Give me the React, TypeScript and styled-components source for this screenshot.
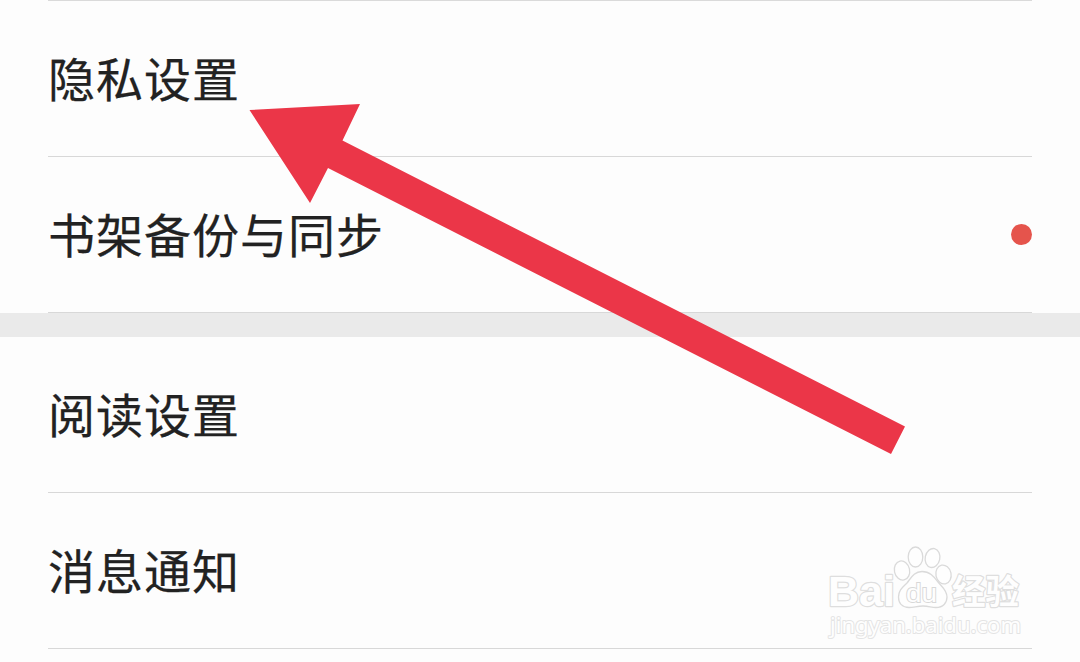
import React from "react";
import styled, { createGlobalStyle } from "styled-components";

const GlobalStyle = createGlobalStyle`
  * { box-sizing: border-box; }
  body { margin: 0; background: #fdfdfd; overflow: hidden; }
`;

const Page = styled.main`
  position: relative;
  width: 1080px;
  height: 662px;
  overflow: hidden;
  background: #fdfdfd;
  color: #222;
  font-family: "Noto Sans CJK SC", sans-serif;
`;

const Group = styled.section<{ $topLine?: boolean }>`
  display: flex;
  flex-direction: column;
  padding: 0 48px;
  &::before {
    content: "";
    display: ${(p) => (p.$topLine ? "block" : "none")};
    height: 1px;
    background: #dadada;
  }
`;

const Row = styled.div`
  display: flex;
  align-items: center;
  justify-content: space-between;
  height: 156px;
  border-bottom: 1px solid #d8d8d8;
`;

const Label = styled.span`
  font-size: 47px;
  letter-spacing: 1px;
  line-height: 70px;
  white-space: nowrap;
  margin-bottom: 3px;
  -webkit-text-stroke: 0.25px #222;
`;

const Dot = styled.i`
  width: 21px;
  height: 21px;
  border-radius: 50%;
  background: #e5544c;
`;

const Divider = styled.div`
  height: 24px;
  background: #eaeaea;
`;

const Arrow = styled.svg`
  position: absolute;
  left: 0;
  top: 0;
  pointer-events: none;
`;

const Watermark = styled.svg`
  position: absolute;
  left: 820px;
  top: 540px;
  pointer-events: none;
`;

export default function App() {
  return (
    <>
      <GlobalStyle />
      <Page>
        <Group $topLine>
          <Row><Label>隐私设置</Label></Row>
          <Row><Label>书架备份与同步</Label><Dot /></Row>
        </Group>
        <Divider />
        <Group>
          <Row><Label>阅读设置</Label></Row>
          <Row><Label>消息通知</Label></Row>
        </Group>
        <Arrow width="1080" height="662" viewBox="0 0 1080 662">
          <polygon points="249.5,110 360,104 342.5,140.5 905,426.5 891,454 328,168 310,203" fill="#eb3648" />
        </Arrow>
        <Watermark width="212" height="104" viewBox="820 540 212 104">
          <g fill="#fefefe" stroke="#dedede" paintOrder="stroke" strokeLinejoin="round">
            <text x="828" y="606" fontFamily="Liberation Sans, sans-serif" fontWeight="700" fontSize="43" textLength="67" lengthAdjust="spacingAndGlyphs" strokeWidth="2.4">Bai</text>
            <text x="952" y="603.5" fontFamily="Noto Sans CJK SC, sans-serif" fontWeight="700" fontSize="34" textLength="67" lengthAdjust="spacingAndGlyphs" strokeWidth="2.4">经验</text>
            <text x="830" y="633" fontFamily="Noto Sans, sans-serif" fontWeight="400" fontSize="22.5" textLength="191" lengthAdjust="spacingAndGlyphs" stroke="#e4e4e4" strokeWidth="2">jingyan.baidu.com</text>
          </g>
          <g fill="#fefefe" stroke="#dadada" strokeWidth="1.3">
            <ellipse cx="902" cy="570.5" rx="7.6" ry="9.7" transform="rotate(-12 902 570.5)" />
            <ellipse cx="915.5" cy="557" rx="7.3" ry="10" />
            <ellipse cx="932.5" cy="558" rx="7.3" ry="9.6" transform="rotate(12 932.5 558)" />
            <ellipse cx="943.5" cy="574.5" rx="7.6" ry="9.5" transform="rotate(-12 943.5 574.5)" />
            <path d="M922 571.5C914 571.5 911 578 907 583C903 587 898.5 590 898.5 597C898.5 604 903 607.5 909 607.5C914 607.5 917 606 923 606C929 606 931 607.5 936 607.5C943 607.5 947 603 947 597C947 590 942 587 938 582C934 577 930 571.5 922 571.5Z" />
          </g>
          <text x="906" y="602" fontFamily="Liberation Sans, sans-serif" fontSize="26" textLength="31" lengthAdjust="spacingAndGlyphs" fill="#fefefe" stroke="#d8d8d8" strokeWidth="1.8" paintOrder="stroke">du</text>
        </Watermark>
      </Page>
    </>
  );
}
